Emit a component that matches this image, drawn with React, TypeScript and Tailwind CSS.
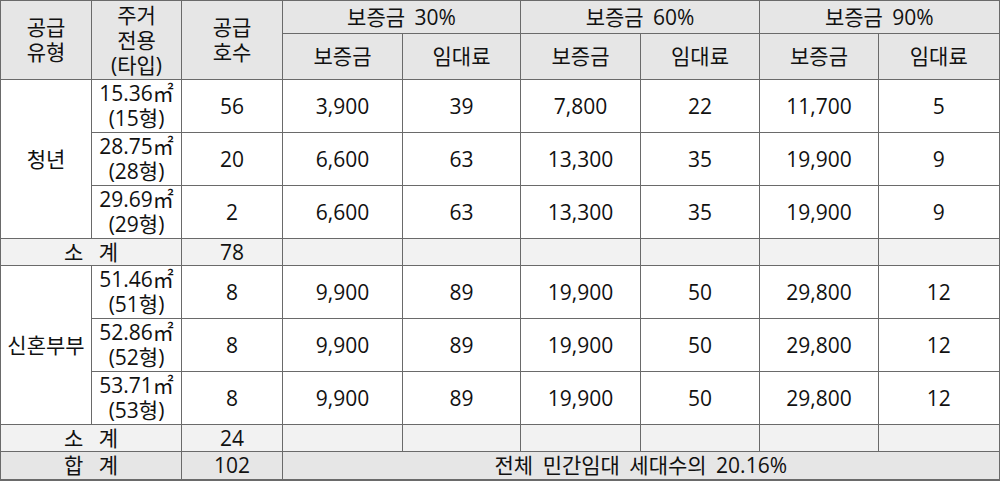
import React from "react";

type Row = {
  area: string;
  type: string;
  count: string;
  vals: string[];
};

const youth: Row[] = [
  { area: "15.36㎡", type: "(15형)", count: "56", vals: ["3,900", "39", "7,800", "22", "11,700", "5"] },
  { area: "28.75㎡", type: "(28형)", count: "20", vals: ["6,600", "63", "13,300", "35", "19,900", "9"] },
  { area: "29.69㎡", type: "(29형)", count: "2", vals: ["6,600", "63", "13,300", "35", "19,900", "9"] },
];

const newlywed: Row[] = [
  { area: "51.46㎡", type: "(51형)", count: "8", vals: ["9,900", "89", "19,900", "50", "29,800", "12"] },
  { area: "52.86㎡", type: "(52형)", count: "8", vals: ["9,900", "89", "19,900", "50", "29,800", "12"] },
  { area: "53.71㎡", type: "(53형)", count: "8", vals: ["9,900", "89", "19,900", "50", "29,800", "12"] },
];

const cell = "border border-[#6a6a6a] text-center align-middle p-0";

function Group({ label, rows, subtotal }: { label: string; rows: Row[]; subtotal: string }) {
  return (
    <>
      {rows.map((r, i) => (
        <tr key={r.area} className="h-[53px]">
          {i === 0 && (
            <td rowSpan={rows.length} className={cell}>
              {label}
            </td>
          )}
          <td className={cell}>
            <div>{r.area}</div>
            <div>{r.type}</div>
          </td>
          <td className={cell}>{r.count}</td>
          {r.vals.map((v, j) => (
            <td key={j} className={cell + (j === 5 ? " border-r-2" : "")}>
              {v}
            </td>
          ))}
        </tr>
      ))}
      <tr className="h-[27px] bg-[#f2f2f2]">
        <td colSpan={2} className={cell + " [word-spacing:10px]"}>
          소 계
        </td>
        <td className={cell}>{subtotal}</td>
        {[0, 1, 2, 3, 4, 5].map((j) => (
          <td key={j} className={cell + (j === 5 ? " border-r-2" : "")}></td>
        ))}
      </tr>
    </>
  );
}

export default function App() {
  return (
    <div className="bg-white w-[1000px] h-[481px] overflow-hidden">
      <table
        className="table-fixed border-collapse w-[999px] text-[21px] leading-[25px] text-[#111]"
        style={{ fontFamily: '"Open Sans", "Noto Sans CJK KR", sans-serif' }}
      >
        <colgroup>
          <col className="w-[91px]" />
          <col className="w-[90px]" />
          <col className="w-[101px]" />
          <col className="w-[120px]" />
          <col className="w-[118px]" />
          <col className="w-[120px]" />
          <col className="w-[119px]" />
          <col className="w-[119px]" />
          <col className="w-[121px]" />
        </colgroup>
        <thead className="bg-[#e6e6e6]">
          <tr className="h-[33px]">
            <td rowSpan={2} className={cell}>
              <div>공급</div>
              <div>유형</div>
            </td>
            <td rowSpan={2} className={cell}>
              <div>주거</div>
              <div>전용</div>
              <div>(타입)</div>
            </td>
            <td rowSpan={2} className={cell}>
              <div>공급</div>
              <div>호수</div>
            </td>
            <td colSpan={2} className={cell + " [word-spacing:4px]"}>보증금 30%</td>
            <td colSpan={2} className={cell + " [word-spacing:4px]"}>보증금 60%</td>
            <td colSpan={2} className={cell + " border-r-2 [word-spacing:4px]"}>보증금 90%</td>
          </tr>
          <tr className="h-[46px]">
            <td className={cell}>보증금</td>
            <td className={cell}>임대료</td>
            <td className={cell}>보증금</td>
            <td className={cell}>임대료</td>
            <td className={cell}>보증금</td>
            <td className={cell + " border-r-2"}>임대료</td>
          </tr>
        </thead>
        <tbody>
          <Group label="청년" rows={youth} subtotal="78" />
          <Group label="신혼부부" rows={newlywed} subtotal="24" />
          <tr className="h-[28px] bg-[#e6e6e6]">
            <td colSpan={2} className={cell + " border-b-2 [word-spacing:10px]"}>
              합 계
            </td>
            <td className={cell + " border-b-2"}>102</td>
            <td colSpan={6} className={cell + " border-b-2 border-r-2 [word-spacing:4px]"}>
              전체 민간임대 세대수의 20.16%
            </td>
          </tr>
        </tbody>
      </table>
    </div>
  );
}
